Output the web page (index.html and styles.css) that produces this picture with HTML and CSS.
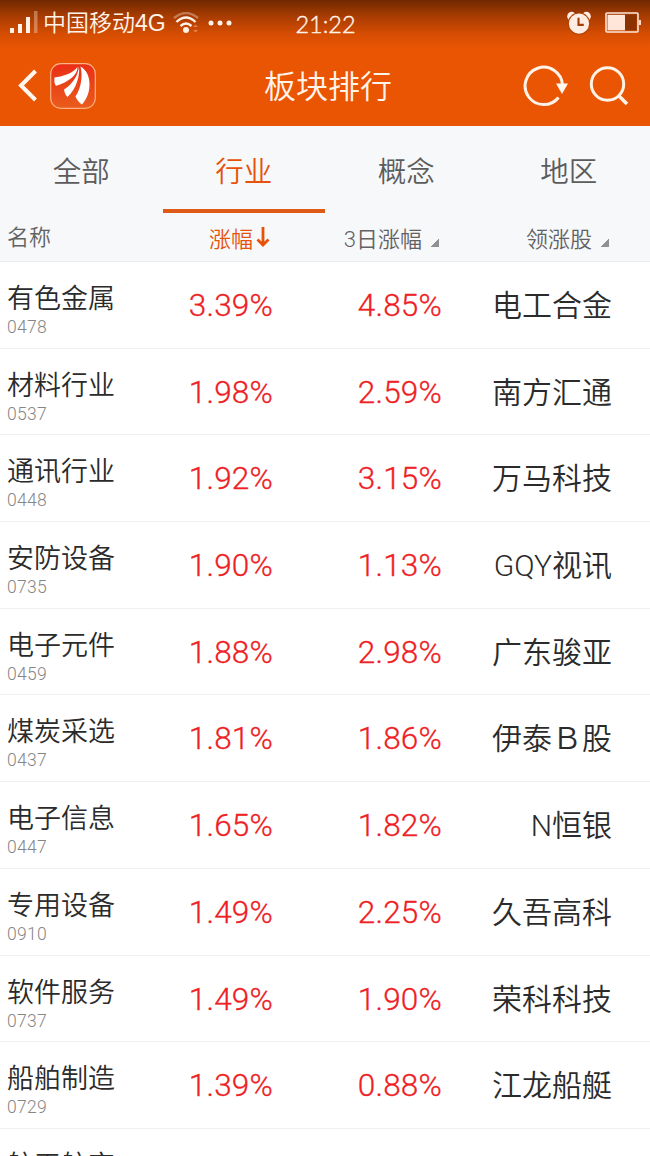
FILE: index.html
```
<!DOCTYPE html>
<html lang="zh-CN">
<head>
	<meta charset="UTF-8">
	<meta name="viewport" content="width=device-width, initial-scale=1">
	<title>板块排行</title>
	<link rel="stylesheet" href="styles.css">
</head>
<body>
	<header class="header">
		<div class="status">
			<div class="status-left">
				<svg class="signal" width="28" height="23" viewBox="0 0 28 23" fill="#fff2e8">
					<rect x="0" y="17" width="4" height="5"/>
					<rect x="8" y="13" width="4" height="9"/>
					<rect x="16" y="6" width="4" height="16"/>
					<rect x="24" y="0" width="3.500" height="22" opacity=".35"/>
				</svg>
				<span class="carrier">中国移动4G</span>
				<svg class="wifi" width="28" height="22" viewBox="0 0 28 22" fill="none" stroke="#fff2e8" stroke-width="2.400">
					<path d="M1 6Q13-4 25 6" opacity=".35"/>
					<path d="M3.500 10Q13 1 22.500 10"/>
					<path d="M7.500 14Q13 9 18.500 14"/>
					<circle cx="13" cy="18" r="3" fill="#fff2e8" stroke="none"/>
					<path d="M20 15l2.500-2.500 2.500 2.500zM20 18l2.500 2.500 2.500-2.500z" fill="#fff2e8" stroke="none" opacity=".35"/>
				</svg>
				<svg class="dots" width="24" height="6" viewBox="0 0 24 6" fill="#fff2e8">
					<circle cx="3" cy="3" r="2.500"/>
					<circle cx="12" cy="3" r="2.500"/>
					<circle cx="21" cy="3" r="2.500"/>
				</svg>
			</div>
			<span class="time">21:22</span>
			<div class="status-right">
				<svg width="24" height="24" viewBox="0 0 25 24" fill="#ffece2">
					<circle cx="4.800" cy="5" r="4.600"/>
					<circle cx="20.200" cy="5" r="4.600"/>
					<circle cx="12.500" cy="12.700" r="11.600" fill="#b04203"/>
					<circle cx="12.500" cy="12.700" r="10.500"/>
					<path d="M12 6.500V14H17.500" fill="none" stroke="#a43c03" stroke-width="2.200"/>
				</svg>
				<svg width="36" height="22" viewBox="0 0 36 22" fill="none">
					<rect x="1" y="1" width="32" height="19" rx="1" stroke="#ffe6d8" stroke-width="1.600"/>
					<rect x="2.500" y="2.800" width="17.500" height="15.500" fill="#ffe6d8"/>
					<rect x="20" y="2.800" width="11.500" height="15.500" fill="#8b3203"/>
					<rect x="34" y="8" width="2" height="5" fill="#ffd9c4"/>
				</svg>
			</div>
		</div>
		<div class="navbar">
			<div class="nav-side">
				<svg class="back" width="20" height="33" viewBox="0 0 20 33" fill="none" stroke="#fff8f0" stroke-width="4">
					<path d="M17.500 2L3 16.500L17.500 31"/>
				</svg>
				<svg class="logo" width="46" height="46" viewBox="0 0 46 46">
					<defs>
						<linearGradient id="logo-bg" x1="0" y1="0" x2="0" y2="1">
							<stop offset="0" stop-color="#e92e16"/>
							<stop offset="1" stop-color="#ea5c1c"/>
						</linearGradient>
					</defs>
					<rect x=".7" y=".7" width="44.600" height="44.600" rx="10" fill="url(#logo-bg)" stroke="#ffb184" stroke-width="1.200"/>
					<g fill="#fff">
						<path d="M4.500 14.500C12 13.500 22 11 27.500 4C28 12 18 19 6.500 22.800C4.500 22.500 4 17.500 4.500 14.500z"/>
						<path d="M29 3.500C30 12 27 25 17.500 34C15.500 32 14.500 30 14 26.500C22 21.500 28 13 29 3.500z"/>
						<path d="M30.500 3.500C37 7 40 15 39.500 23C39 31 36 37 32 41.500C29 39.500 27 37 25.500 33.500C31 25 33 14 30.500 3.500z"/>
					</g>
				</svg>
			</div>
			<h1 class="title">板块排行</h1>
			<div class="nav-side nav-actions">
				<svg width="46" height="42" viewBox="0 0 46 42" fill="none" stroke="#fff2e8" stroke-width="3">
					<path d="M35.500 32.500A18.700 18.700 0 1 1 39.500 20"/>
					<path d="M33 18.500H45L39 29z" fill="#fff8f0" stroke="none"/>
				</svg>
				<svg width="40" height="40" viewBox="0 0 40 40" fill="none" stroke="#fff2e8" stroke-width="3">
					<circle cx="18.500" cy="18" r="16.200"/>
					<path d="M29.500 29.500L38 38" stroke-width="3.500"/>
				</svg>
			</div>
		</div>
	</header>

	<nav class="tabs">
		<a class="tab">全部</a>
		<a class="tab active">行业</a>
		<a class="tab">概念</a>
		<a class="tab">地区</a>
	</nav>

	<div class="grid head">
		<div class="head-name">名称</div>
		<div class="sorted">涨幅<svg width="14" height="20" viewBox="0 0 14 20" fill="none" stroke="#e6520a" stroke-width="2.800"><path d="M7 0V18M1.500 12.500L7 18L12.500 12.500"/></svg></div>
		<div>3日涨幅<i class="corner"></i></div>
		<div>领涨股<i class="corner"></i></div>
	</div>

	<main class="list">
		<div class="grid row"><div class="name">有色金属<small>0478</small></div><b>3.39%</b><b>4.85%</b><span>电工合金</span></div>
		<div class="grid row"><div class="name">材料行业<small>0537</small></div><b>1.98%</b><b>2.59%</b><span>南方汇通</span></div>
		<div class="grid row"><div class="name">通讯行业<small>0448</small></div><b>1.92%</b><b>3.15%</b><span>万马科技</span></div>
		<div class="grid row"><div class="name">安防设备<small>0735</small></div><b>1.90%</b><b>1.13%</b><span>GQY视讯</span></div>
		<div class="grid row"><div class="name">电子元件<small>0459</small></div><b>1.88%</b><b>2.98%</b><span>广东骏亚</span></div>
		<div class="grid row"><div class="name">煤炭采选<small>0437</small></div><b>1.81%</b><b>1.86%</b><span>伊泰Ｂ股</span></div>
		<div class="grid row"><div class="name">电子信息<small>0447</small></div><b>1.65%</b><b>1.82%</b><span>N恒银</span></div>
		<div class="grid row"><div class="name">专用设备<small>0910</small></div><b>1.49%</b><b>2.25%</b><span>久吾高科</span></div>
		<div class="grid row"><div class="name">软件服务<small>0737</small></div><b>1.49%</b><b>1.90%</b><span>荣科科技</span></div>
		<div class="grid row"><div class="name">船舶制造<small>0729</small></div><b>1.39%</b><b>0.88%</b><span>江龙船艇</span></div>
		<div class="grid row"><div class="name">航天航空</div></div>
	</main>
</body>
</html>
```

FILE: styles.css
```
* {
	box-sizing: border-box;
}

body {
	display: flex;
	flex-direction: column;
	height: 1156px;
	margin: 0;
	overflow: hidden;
	background-color: #fff;
	color: #2b2b2b;
	font-family: Roboto, "Noto Sans CJK SC", sans-serif;
	font-weight: 350;
}

svg {
	display: block;
	flex: none;
}

/* header */
.header {
	flex: none;
	height: 126px;
	background: linear-gradient(#702800 0, #a83c02 16px, #d54d02 34px, #ea5504 48px);
	color: #fff4ea;
}

.status {
	display: grid;
	grid-template-columns: 1fr auto 1fr;
	align-items: center;
	height: 45px;
	padding: 0 9px 0 10px;
}

.status-left, .status-right {
	display: flex;
	align-items: center;
}

.status-right {
	justify-content: flex-end;
	gap: 14px;
}

.carrier {
	margin-left: 5px;
	font-family: "Liberation Sans", "Noto Sans CJK SC", sans-serif;
	font-size: 23px;
	line-height: 44px;
	white-space: nowrap;
}

.wifi {
	margin-left: 7px;
}

.dots {
	margin-left: 7px;
}

.time {
	padding-top: 2px;
	font-family: Lato, sans-serif;
	font-size: 23.500px;
	font-weight: 300;
	-webkit-text-stroke: 0.4px;
}

.navbar {
	display: grid;
	grid-template-columns: 1fr auto 1fr;
	align-items: center;
	height: 81px;
	padding: 0 21px 0 18px;
}

.nav-side {
	display: flex;
	align-items: center;
	gap: 12px;
}

.nav-actions {
	justify-content: flex-end;
	gap: 20px;
}

.title {
	margin: 0 0 0 9px;
	padding-top: 4px;
	font-size: 32px;
	font-weight: 350;
	line-height: 77px;
}

/* tabs */
.tabs {
	display: flex;
	flex: none;
	height: 87px;
	background-color: #f7f8fa;
}

.tab {
	flex: 1;
	border-bottom: 4px solid transparent;
	color: #5c5c5c;
	font-size: 28.500px;
	line-height: 94px;
	text-align: center;
}

.tab.active {
	border-color: #e05a17;
	color: #e6520a;
}

/* table */
.grid {
	display: grid;
	grid-template-columns: 160px 113px 169px 170px;
}

.head {
	flex: none;
	height: 49px;
	border-bottom: 1px solid #e8ebee;
	background-color: #f7f8fa;
	color: #626262;
	font-size: 22px;
}

.head > div {
	display: flex;
	align-items: center;
	justify-content: flex-end;
	height: 48px;
	padding: 0 3px 1px 0;
}

.head > .head-name {
	justify-content: flex-start;
	padding: 0 0 4px 7px;
}

.head > .sorted {
	gap: 3px;
	color: #e6520a;
}

.corner {
	width: 9px;
	height: 9px;
	margin: 12px 0 0 8px;
	background: linear-gradient(135deg, transparent 50%, #919191 50%);
}

.row {
	height: 86.700px;
	border-bottom: 1px solid #efefef;
	text-align: right;
}

.name {
	padding: 19px 0 0 7px;
	font-size: 27px;
	line-height: 36px;
	text-align: left;
}

.name small {
	display: block;
	color: #868686;
	font-size: 17.500px;
	font-weight: 300;
	line-height: 20px;
	letter-spacing: 0.3px;
}

.row b {
	color: #ee2024;
	font-size: 31.500px;
	font-weight: 300;
	line-height: 88px;
	letter-spacing: 0.2px;
	-webkit-text-stroke: 0.3px;
}

.row span {
	font-size: 30px;
	line-height: 88px;
	white-space: nowrap;
}
```
